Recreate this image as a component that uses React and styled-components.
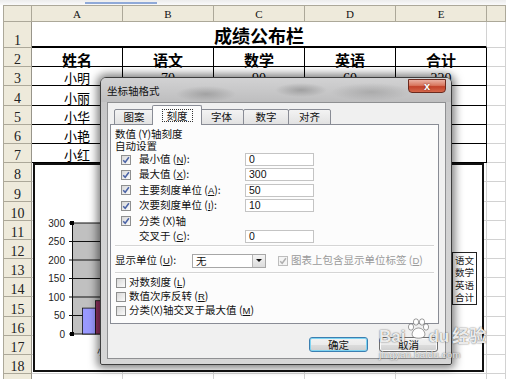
import React from 'react'
import styled, { createGlobalStyle } from 'styled-components'

const GlobalStyle = createGlobalStyle`
  html, body { margin: 0; padding: 0; background: #fff; }
  body { font-family: "Liberation Sans", "Noto Sans CJK SC", sans-serif; }
`

const Page = styled.div`
  position: relative;
  width: 506px;
  height: 379px;
  overflow: hidden;
  background: #fff;
`

const TopStrip = styled.div`
  height: 5px;
  display: flex;
  padding-left: 85px;
  background: linear-gradient(#ececec, #fafafa);
`

const BlueMark = styled.div`
  width: 72px;
  height: 2px;
  margin-top: 2px;
  background: #8fa9d8;
`

const Sheet = styled.div`
  display: grid;
  grid-template-columns: 29px repeat(5, 91px) 1fr;
  grid-template-rows: 17px 26px repeat(18, 19.2px);
  margin-left: 3px;
`

const headBg = '#eeeadb'
const headLine = '#aca899'
const gridLine = '#d2d2d2'

const Corner = styled.div`
  background: ${headBg};
  border: 1px solid ${headLine};
  box-sizing: border-box;
`

const ColHead = styled.div`
  background: ${headBg};
  border-top: 1px solid ${headLine};
  border-right: 1px solid ${headLine};
  border-bottom: 1px solid ${headLine};
  box-sizing: border-box;
  display: flex;
  align-items: center;
  justify-content: center;
  font-family: "Liberation Serif", serif;
  font-size: 11px;
  color: #111;
`

const RowHead = styled.div`
  background: ${headBg};
  border-left: 1px solid ${headLine};
  border-right: 1px solid #98958a;
  border-bottom: 1px solid ${headLine};
  box-sizing: border-box;
  display: flex;
  align-items: flex-end;
  justify-content: center;
  font-family: "Liberation Serif", serif;
  font-size: 14px;
  line-height: 12px;
  color: #222;
  overflow: hidden;
`

const Cell = styled.div`
  box-sizing: border-box;
  border-right: 1px solid ${p => (p.$table ? '#000' : gridLine)};
  border-bottom: 1px solid ${p => (p.$table ? '#000' : gridLine)};
  display: flex;
  align-items: flex-end;
  justify-content: center;
  font-family: ${p => (p.$num ? '"Liberation Serif", serif' : '"Noto Sans CJK SC", sans-serif')};
  font-size: ${p => (p.$bold ? 15 : p.$num ? 14 : 13)}px;
  font-weight: ${p => (p.$bold ? 700 : 400)};
  line-height: ${p => (p.$bold ? 13 : p.$num ? 12 : 15)}px;
  color: #000;
`

const TitleCell = styled.div`
  grid-column: span 5;
  box-sizing: border-box;
  border-right: 1px solid ${gridLine};
  border-bottom: 2px solid #000;
  display: flex;
  align-items: flex-end;
  justify-content: center;
  font-family: "Noto Sans CJK SC", sans-serif;
  font-size: 18px;
  font-weight: 700;
  line-height: 22px;
  color: #000;
`

/* embedded chart object */
const ChartBox = styled.div`
  position: absolute;
  left: 33px;
  top: 163px;
  width: 451px;
  height: 209px;
  box-sizing: border-box;
  border: 2px solid #111;
  background: #fff;
`

const Legend = styled.div`
  position: absolute;
  left: 417px;
  top: 87px;
  width: 25px;
  box-sizing: border-box;
  border: 1px solid #222;
  background: #fff;
  padding: 1px 0 1px 2px;
  display: flex;
  flex-direction: column;
  font-family: "Noto Sans CJK SC", sans-serif;
  font-size: 9.5px;
  line-height: 12.3px;
  color: #222;
`

/* dialog */
const Dialog = styled.div`
  position: absolute;
  left: 100px;
  top: 77px;
  width: 352px;
  height: 288px;
  box-sizing: border-box;
  display: flex;
  flex-direction: column;
  border: 1px solid #3e3e3e;
  border-radius: 6px 6px 2px 2px;
  background: linear-gradient(180deg, #d2d2d2 0%, #c6c6c7 9%, #d1d1d2 40%, #d6d6d6 100%);
  box-shadow: 0 0 8px 3px rgba(0, 0, 0, 0.5);
  font-family: "Liberation Sans", "Noto Sans CJK SC", sans-serif;
  color: #111;
`

const TitleBar = styled.div`
  height: 24px;
  display: flex;
  justify-content: space-between;
  padding: 0 5px 0 6px;
  border-radius: 5px 5px 0 0;
  background:
    radial-gradient(ellipse 30px 8px at 105px 16px, rgba(110, 110, 110, 0.4), transparent),
    radial-gradient(ellipse 26px 7px at 200px 12px, rgba(100, 100, 100, 0.4), transparent),
    radial-gradient(ellipse 40px 9px at 270px 14px, rgba(120, 120, 120, 0.35), transparent),
    linear-gradient(#d2d2d3, #bebebf);
`

const TitleText = styled.div`
  align-self: center;
  font-family: "Noto Sans CJK SC", sans-serif;
  font-size: 10.5px;
  color: #111;
`

const CloseButton = styled.div`
  width: 38px;
  height: 14px;
  margin-top: 1px;
  box-sizing: border-box;
  border: 1px solid #6b2a1e;
  border-radius: 0 0 4px 4px;
  background: linear-gradient(#eab0a2 0%, #d9775f 45%, #c2422a 55%, #d5674b 100%);
  display: flex;
  align-items: center;
  justify-content: center;
  color: #fff;
  font-size: 11px;
  font-weight: 700;
  line-height: 11px;
  text-shadow: 0 0 2px #6b2a1e;
`

const Client = styled.div`
  flex: 1;
  margin: 0 5px 5px 6px;
  box-sizing: border-box;
  border: 1px solid #8f9092;
  background: #f0f0f0;
  display: flex;
  flex-direction: column;
  padding: 0 6px 0 2px;
`

const TabRow = styled.div`
  height: 21px;
  display: flex;
  align-items: flex-end;
  padding-left: 4px;
`

const Tab = styled.div`
  position: relative;
  z-index: ${p => (p.$active ? 3 : 2)};
  width: ${p => p.$w}px;
  height: ${p => (p.$active ? 20 : 16)}px;
  margin: 0 ${p => (p.$active ? -2 : 0)}px -1px ${p => (p.$active ? -2 : -1)}px;
  &:first-child { margin-left: 0; }
  box-sizing: border-box;
  border: 1px solid #898c95;
  border-bottom: ${p => (p.$active ? 'none' : '1px solid #898c95')};
  border-radius: 2px 2px 0 0;
  background: ${p => (p.$active ? '#fcfcfc' : 'linear-gradient(#f3f3f3, #e2e2e2)')};
  display: flex;
  align-items: center;
  justify-content: center;
  font-family: "Noto Sans CJK SC", sans-serif;
  font-size: 10.5px;
  line-height: 12px;
`

const Focus = styled.span`
  border: 1px dotted #333;
  padding: 0 4px;
  line-height: 11px;
`

const Panel = styled.div`
  height: 200px;
  box-sizing: border-box;
  border: 1px solid #898c95;
  background: #fcfcfc;
  padding: 3px 4px 0 4px;
  display: flex;
  flex-direction: column;
  font-size: 11px;
`

const Heading = styled.div`
  height: 12px;
  line-height: 12px;
  font-family: "Noto Sans CJK SC", sans-serif;
  font-size: 10.5px;
`

const FormRow = styled.div`
  height: ${p => p.$h || 15.3}px;
  display: flex;
  align-items: center;
  padding-left: ${p => p.$indent ?? 6}px;
  gap: ${p => p.$gap ?? 8}px;
  margin-top: ${p => p.$top || 0}px;
`

const Box = styled.span`
  width: 10px;
  height: 10px;
  flex: none;
  box-sizing: border-box;
  border: 1px solid ${p => (p.$disabled ? '#bdbdbd' : '#8e8f8f')};
  background: ${p => (p.$disabled ? '#f4f4f4' : 'linear-gradient(135deg, #d8d8d8, #fbfbfb)')};
  display: inline-flex;
  align-items: center;
  justify-content: center;
`

const Spacer = styled.span`
  width: 10px;
  flex: none;
`

const Label = styled.span`
  width: ${p => (p.$w ? `${p.$w}px` : 'auto')};
  flex: none;
  font-family: "Noto Sans CJK SC", sans-serif;
  font-size: 10.5px;
  line-height: 12px;
  color: ${p => (p.$disabled ? '#9a9a9a' : '#111')};
  white-space: nowrap;
`

const Key = styled.span`
  text-decoration: underline;
  font-family: "Liberation Sans", sans-serif;
  font-size: 9.5px;
`

const Field = styled.div`
  width: 69px;
  height: 13px;
  flex: none;
  box-sizing: border-box;
  border: 1px solid #c4c4c4;
  background: #fff;
  padding-left: 3px;
  display: flex;
  align-items: center;
  font-size: 10.5px;
  line-height: 11px;
  color: #111;
`

const Separator = styled.div`
  height: 0;
  margin: ${p => p.$top || 0}px 0 0 0;
  border-top: 1px solid #d5d5d5;
  border-bottom: 1px solid #fff;
`

const Select = styled.div`
  width: 74px;
  height: 14px;
  flex: none;
  box-sizing: border-box;
  border: 1px solid #a7a7a7;
  background: #fff;
  display: flex;
  align-items: center;
  justify-content: space-between;
  padding-left: 3px;
  font-family: "Noto Sans CJK SC", sans-serif;
  font-size: 10.5px;
  line-height: 12px;
`

const DropButton = styled.span`
  width: 13px;
  height: 12px;
  box-sizing: border-box;
  border-left: 1px solid #b5b5b5;
  background: linear-gradient(#f4f4f4, #dcdcdc);
  display: flex;
  align-items: center;
  justify-content: center;
  &::after {
    content: "";
    border-left: 3px solid transparent;
    border-right: 3px solid transparent;
    border-top: 3px solid #111;
  }
`

const ButtonRow = styled.div`
  margin-top: 13px;
  display: flex;
  justify-content: flex-end;
  gap: 11px;
  padding-right: 1px;
`

const Button = styled.div`
  width: 59px;
  height: 15px;
  box-sizing: border-box;
  border: 1px solid ${p => (p.$default ? '#3c7fb1' : '#707070')};
  border-radius: 3px;
  background: linear-gradient(#f2f2f2 0%, #ebebeb 50%, #dddddd 51%, #cfcfcf 100%);
  box-shadow: inset 0 0 0 1px ${p => (p.$default ? '#7fd4f2' : '#fbfbfb')};
  display: flex;
  align-items: center;
  justify-content: center;
  font-family: "Noto Sans CJK SC", sans-serif;
  font-size: 10.5px;
  line-height: 12px;
  color: #111;
`

/* baidu watermark */
const Watermark = styled.div`
  position: absolute;
  left: 379px;
  top: 318px;
  display: flex;
  flex-direction: column;
  align-items: flex-start;
  color: rgba(255, 255, 255, 0.9);
  text-shadow: 0 0 1px rgba(60, 60, 60, 0.75), 0 0 2px rgba(60, 60, 60, 0.45);
  pointer-events: none;
`

const MarkLine = styled.div`
  display: flex;
  align-items: flex-end;
  font-family: "Liberation Sans", "Noto Sans CJK SC", sans-serif;
  font-size: 17px;
  font-weight: 700;
  line-height: 18px;
`

const MarkUrl = styled.div`
  margin-top: 3px;
  font-family: "Liberation Sans", sans-serif;
  font-size: 9.5px;
  letter-spacing: 0.3px;
`

const rows = [
  ['小明', 70, 90, 60, 220],
  ['小丽', 80, 75, 85, 240],
  ['小华', 65, 80, 90, 235],
  ['小艳', 90, 85, 70, 245],
  ['小红', 75, 95, 80, 250],
]

const Check = ({ on, disabled }) => (
  <Box $disabled={disabled}>
    {on && (
      <svg width="8" height="8" viewBox="0 0 8 8">
        <path d="M1.2 4.2 L3.2 6.3 L6.9 1.3" fill="none" stroke={disabled ? '#b0b0b0' : '#4a63a6'} strokeWidth="1.5" />
      </svg>
    )}
  </Box>
)

const Mn = ({ text, k }) => {
  if (!k) return text
  const i = text.lastIndexOf(`(${k})`)
  return (
    <>
      {text.slice(0, i)} (<Key>{k}</Key>){text.slice(i + 3)}
    </>
  )
}

const ticks = [0, 50, 100, 150, 200, 250, 300]
const yOf = v => 334 - (v * 111) / 300

const Chart = () => (
  <ChartBox>
    <svg width="447" height="205" viewBox="35 165 447 205">
      <rect x="73" y="223" width="240" height="111" fill="#c0c0c0" />
      {ticks.map(v => (
        <g key={v}>
          <line x1="73" x2="313" y1={yOf(v)} y2={yOf(v)} stroke="#111" strokeWidth="1" />
          <line x1="69" x2="73" y1={yOf(v)} y2={yOf(v)} stroke="#111" strokeWidth="1" />
          <text x="65" y={yOf(v) + 3.5} textAnchor="end" fontFamily="Liberation Sans, sans-serif" fontSize="10" fill="#222">
            {v}
          </text>
        </g>
      ))}
      <line x1="72.5" x2="72.5" y1="223" y2="334" stroke="#111" />
      <rect x="82.5" y={yOf(70)} width="13" height={334 - yOf(70)} fill="#9999ff" stroke="#111" strokeWidth="0.8" />
      <rect x="95.5" y={yOf(90)} width="14" height={334 - yOf(90)} fill="#993366" stroke="#111" strokeWidth="0.8" />
      <rect x="70" y="221" width="4" height="4" fill="#000" />
      <rect x="70" y="332" width="4" height="4" fill="#000" />
      <text x="97" y="355" fontFamily="Noto Sans CJK SC, sans-serif" fontSize="10" fill="#222">小明</text>
    </svg>
    <Legend>
      <span>语文</span>
      <span>数学</span>
      <span>英语</span>
      <span>合计</span>
    </Legend>
  </ChartBox>
)

const checked = [
  { text: '最小值(N):', k: 'N', value: '0' },
  { text: '最大值(X):', k: 'X', value: '300' },
  { text: '主要刻度单位(A):', k: 'A', value: '50' },
  { text: '次要刻度单位(I):', k: 'I', value: '10' },
]

const options = [
  { text: '对数刻度(L)', k: 'L' },
  { text: '数值次序反转(R)', k: 'R' },
  { text: '分类(X)轴交叉于最大值(M)', k: 'M' },
]

const tabs = [
  { t: '图案', w: 40 },
  { t: '刻度', w: 50, active: true },
  { t: '字体', w: 45 },
  { t: '数字', w: 46 },
  { t: '对齐', w: 43 },
]

const AxisDialog = () => (
  <Dialog>
    <TitleBar>
      <TitleText>坐标轴格式</TitleText>
      <CloseButton>x</CloseButton>
    </TitleBar>
    <Client>
      <TabRow>
        {tabs.map(tab => (
          <Tab key={tab.t} $w={tab.w} $active={tab.active}>
            {tab.active ? <Focus>{tab.t}</Focus> : tab.t}
          </Tab>
        ))}
      </TabRow>
      <Panel>
        <Heading>数值 (Y)轴刻度</Heading>
        <Heading>自动设置</Heading>
        {checked.map(row => (
          <FormRow key={row.text}>
            <Check on />
            <Label $w={98}><Mn text={row.text} k={row.k} /></Label>
            <Field>{row.value}</Field>
          </FormRow>
        ))}
        <FormRow>
          <Check on />
          <Label>分类 (X)轴</Label>
        </FormRow>
        <FormRow>
          <Spacer />
          <Label $w={98}><Mn text="交叉于(C):" k="C" /></Label>
          <Field>0</Field>
        </FormRow>
        <Separator $top={1} />
        <FormRow $indent={0} $gap={0} $h={14} $top={7}>
          <Label $w={77}><Mn text="显示单位(U):" k="U" /></Label>
          <Select>
            无
            <DropButton />
          </Select>
          <FormRow $indent={12} $gap={3} $h={14}>
            <Check on disabled />
            <Label $disabled><Mn text="图表上包含显示单位标签(D)" k="D" /></Label>
          </FormRow>
        </FormRow>
        <Separator $top={4} />
        {options.map((row, i) => (
          <FormRow key={row.text} $indent={1} $gap={3} $h={14} $top={i === 0 ? 2 : 0}>
            <Check />
            <Label><Mn text={row.text} k={row.k} /></Label>
          </FormRow>
        ))}
      </Panel>
      <ButtonRow>
        <Button $default>确定</Button>
        <Button>取消</Button>
      </ButtonRow>
    </Client>
  </Dialog>
)

const Paw = () => (
  <svg width="24" height="22" viewBox="0 0 24 22" style={{ margin: '0 -2px 6px 1px' }}>
    <g fill="rgba(255,255,255,0.9)" stroke="rgba(70,70,70,0.65)" strokeWidth="0.8">
      <ellipse cx="5" cy="9" rx="2.6" ry="3.2" />
      <ellipse cx="10" cy="4" rx="2.6" ry="3.2" />
      <ellipse cx="16" cy="4" rx="2.6" ry="3.2" />
      <ellipse cx="20" cy="9" rx="2.6" ry="3.2" />
      <path d="M12.5 10 C8 10 5 15 6.5 18 C8 21 17 21 18.5 18 C20 15 17 10 12.5 10 Z" />
    </g>
  </svg>
)

export default function App() {
  return (
    <Page>
      <GlobalStyle />
      <TopStrip>
        <BlueMark />
      </TopStrip>
      <Sheet>
        <Corner />
        {['A', 'B', 'C', 'D', 'E', ''].map((c, i) => (
          <ColHead key={i}>{c}</ColHead>
        ))}
        <RowHead>1</RowHead>
        <TitleCell>成绩公布栏</TitleCell>
        <Cell />
        <RowHead>2</RowHead>
        {['姓名', '语文', '数学', '英语', '合计'].map(h => (
          <Cell key={h} $table $bold>{h}</Cell>
        ))}
        <Cell />
        {rows.map((r, i) => (
          <React.Fragment key={r[0]}>
            <RowHead>{i + 3}</RowHead>
            {r.map((v, j) => (
              <Cell key={j} $table $num={j > 0}>{v}</Cell>
            ))}
            <Cell />
          </React.Fragment>
        ))}
        {Array.from({ length: 12 }, (_, i) => i + 8).map(n => (
          <React.Fragment key={n}>
            <RowHead>{n < 19 ? n : ''}</RowHead>
            {Array.from({ length: 6 }, (_, j) => (
              <Cell key={j} />
            ))}
          </React.Fragment>
        ))}
      </Sheet>
      <Chart />
      <AxisDialog />
      <Watermark>
        <MarkLine>
          Bai<Paw />du<span style={{ marginLeft: 3 }}>经验</span>
        </MarkLine>
        <MarkUrl>jingyan.baidu.com</MarkUrl>
      </Watermark>
    </Page>
  )
}
